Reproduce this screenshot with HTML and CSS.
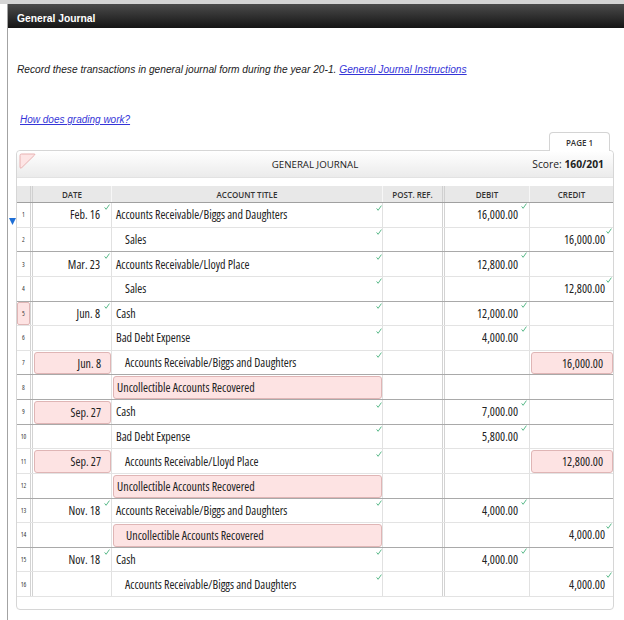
FILE: index.html
```html
<!DOCTYPE html>
<html>
<head>
<meta charset="utf-8">
<link rel="stylesheet" href="styles.css">
</head>
<body>
<div class="strip"></div>
<div class="frame">
  <div class="bar">General Journal</div>
  <div class="content">
    <p class="intro">Record these transactions in general journal form during the year 20-1. <a href="#">General Journal Instructions</a></p>
    <p class="grading"><a href="#">How does grading work?</a></p>
    <div class="tabs"><div class="tab">PAGE 1</div></div>
    <div class="panel">
      <div class="phead">
        <svg class="flag" viewBox="0 0 17 16"><path d="M2.5 1 H15 Q16.6 1 15.6 2 L2.8 14.6 Q1 16 1 14 V2.5 Q1 1 2.5 1 Z"/></svg>
        <div class="ptitle">GENERAL JOURNAL</div>
        <div class="score">Score: <b>160/201</b></div>
      </div>
      <div class="jtable">
        <div class="jrow head"><div class="n"></div><div>DATE</div><div>ACCOUNT TITLE</div><div class="p">POST. REF.</div><div>DEBIT</div><div>CREDIT</div></div>

        <div class="jrow">
          <svg class="mark" viewBox="0 0 7 7"><path d="M0 0H7L3.5 7Z"/></svg>
          <div class="n">1</div>
          <div class="d">Feb. 16<svg class="ck" viewBox="0 0 6 6"><path d="M0.6 3.4L2.1 5.3L5.4 0.6"/></svg></div>
          <div class="a">Accounts Receivable/Biggs and Daughters<svg class="ck" viewBox="0 0 6 6"><path d="M0.6 3.4L2.1 5.3L5.4 0.6"/></svg></div>
          <div class="p"></div>
          <div class="db">16,000.00<svg class="ck" viewBox="0 0 6 6"><path d="M0.6 3.4L2.1 5.3L5.4 0.6"/></svg></div>
          <div class="cr"></div>
        </div>
        <div class="jrow sep">
          <div class="n">2</div>
          <div class="d"></div>
          <div class="a in">Sales<svg class="ck" viewBox="0 0 6 6"><path d="M0.6 3.4L2.1 5.3L5.4 0.6"/></svg></div>
          <div class="p"></div>
          <div class="db"></div>
          <div class="cr">16,000.00<svg class="ck" viewBox="0 0 6 6"><path d="M0.6 3.4L2.1 5.3L5.4 0.6"/></svg></div>
        </div>
        <div class="jrow">
          <div class="n">3</div>
          <div class="d">Mar. 23<svg class="ck" viewBox="0 0 6 6"><path d="M0.6 3.4L2.1 5.3L5.4 0.6"/></svg></div>
          <div class="a">Accounts Receivable/Lloyd Place<svg class="ck" viewBox="0 0 6 6"><path d="M0.6 3.4L2.1 5.3L5.4 0.6"/></svg></div>
          <div class="p"></div>
          <div class="db">12,800.00<svg class="ck" viewBox="0 0 6 6"><path d="M0.6 3.4L2.1 5.3L5.4 0.6"/></svg></div>
          <div class="cr"></div>
        </div>
        <div class="jrow sep">
          <div class="n">4</div>
          <div class="d"></div>
          <div class="a in">Sales<svg class="ck" viewBox="0 0 6 6"><path d="M0.6 3.4L2.1 5.3L5.4 0.6"/></svg></div>
          <div class="p"></div>
          <div class="db"></div>
          <div class="cr">12,800.00<svg class="ck" viewBox="0 0 6 6"><path d="M0.6 3.4L2.1 5.3L5.4 0.6"/></svg></div>
        </div>
        <div class="jrow">
          <div class="n x"><span class="err">5</span></div>
          <div class="d">Jun. 8<svg class="ck" viewBox="0 0 6 6"><path d="M0.6 3.4L2.1 5.3L5.4 0.6"/></svg></div>
          <div class="a">Cash<svg class="ck" viewBox="0 0 6 6"><path d="M0.6 3.4L2.1 5.3L5.4 0.6"/></svg></div>
          <div class="p"></div>
          <div class="db">12,000.00<svg class="ck" viewBox="0 0 6 6"><path d="M0.6 3.4L2.1 5.3L5.4 0.6"/></svg></div>
          <div class="cr"></div>
        </div>
        <div class="jrow">
          <div class="n">6</div>
          <div class="d"></div>
          <div class="a">Bad Debt Expense<svg class="ck" viewBox="0 0 6 6"><path d="M0.6 3.4L2.1 5.3L5.4 0.6"/></svg></div>
          <div class="p"></div>
          <div class="db">4,000.00<svg class="ck" viewBox="0 0 6 6"><path d="M0.6 3.4L2.1 5.3L5.4 0.6"/></svg></div>
          <div class="cr"></div>
        </div>
        <div class="jrow sep">
          <div class="n">7</div>
          <div class="d x"><span class="err">Jun. 8</span></div>
          <div class="a in">Accounts Receivable/Biggs and Daughters<svg class="ck" viewBox="0 0 6 6"><path d="M0.6 3.4L2.1 5.3L5.4 0.6"/></svg></div>
          <div class="p"></div>
          <div class="db"></div>
          <div class="cr x"><span class="err">16,000.00</span></div>
        </div>
        <div class="jrow sep">
          <div class="n">8</div>
          <div class="d"></div>
          <div class="a x"><span class="err">Uncollectible Accounts Recovered</span></div>
          <div class="p"></div>
          <div class="db"></div>
          <div class="cr"></div>
        </div>
        <div class="jrow sep">
          <div class="n">9</div>
          <div class="d x"><span class="err">Sep. 27</span></div>
          <div class="a">Cash<svg class="ck" viewBox="0 0 6 6"><path d="M0.6 3.4L2.1 5.3L5.4 0.6"/></svg></div>
          <div class="p"></div>
          <div class="db">7,000.00<svg class="ck" viewBox="0 0 6 6"><path d="M0.6 3.4L2.1 5.3L5.4 0.6"/></svg></div>
          <div class="cr"></div>
        </div>
        <div class="jrow">
          <div class="n">10</div>
          <div class="d"></div>
          <div class="a">Bad Debt Expense<svg class="ck" viewBox="0 0 6 6"><path d="M0.6 3.4L2.1 5.3L5.4 0.6"/></svg></div>
          <div class="p"></div>
          <div class="db">5,800.00<svg class="ck" viewBox="0 0 6 6"><path d="M0.6 3.4L2.1 5.3L5.4 0.6"/></svg></div>
          <div class="cr"></div>
        </div>
        <div class="jrow">
          <div class="n">11</div>
          <div class="d x"><span class="err">Sep. 27</span></div>
          <div class="a in">Accounts Receivable/Lloyd Place<svg class="ck" viewBox="0 0 6 6"><path d="M0.6 3.4L2.1 5.3L5.4 0.6"/></svg></div>
          <div class="p"></div>
          <div class="db"></div>
          <div class="cr x"><span class="err">12,800.00</span></div>
        </div>
        <div class="jrow sep">
          <div class="n">12</div>
          <div class="d"></div>
          <div class="a x"><span class="err">Uncollectible Accounts Recovered</span></div>
          <div class="p"></div>
          <div class="db"></div>
          <div class="cr"></div>
        </div>
        <div class="jrow">
          <div class="n">13</div>
          <div class="d">Nov. 18<svg class="ck" viewBox="0 0 6 6"><path d="M0.6 3.4L2.1 5.3L5.4 0.6"/></svg></div>
          <div class="a">Accounts Receivable/Biggs and Daughters<svg class="ck" viewBox="0 0 6 6"><path d="M0.6 3.4L2.1 5.3L5.4 0.6"/></svg></div>
          <div class="p"></div>
          <div class="db">4,000.00<svg class="ck" viewBox="0 0 6 6"><path d="M0.6 3.4L2.1 5.3L5.4 0.6"/></svg></div>
          <div class="cr"></div>
        </div>
        <div class="jrow sep">
          <div class="n">14</div>
          <div class="d"></div>
          <div class="a in x"><span class="err">Uncollectible Accounts Recovered</span></div>
          <div class="p"></div>
          <div class="db"></div>
          <div class="cr">4,000.00<svg class="ck" viewBox="0 0 6 6"><path d="M0.6 3.4L2.1 5.3L5.4 0.6"/></svg></div>
        </div>
        <div class="jrow">
          <div class="n">15</div>
          <div class="d">Nov. 18<svg class="ck" viewBox="0 0 6 6"><path d="M0.6 3.4L2.1 5.3L5.4 0.6"/></svg></div>
          <div class="a">Cash<svg class="ck" viewBox="0 0 6 6"><path d="M0.6 3.4L2.1 5.3L5.4 0.6"/></svg></div>
          <div class="p"></div>
          <div class="db">4,000.00<svg class="ck" viewBox="0 0 6 6"><path d="M0.6 3.4L2.1 5.3L5.4 0.6"/></svg></div>
          <div class="cr"></div>
        </div>
        <div class="jrow">
          <div class="n">16</div>
          <div class="d"></div>
          <div class="a in">Accounts Receivable/Biggs and Daughters<svg class="ck" viewBox="0 0 6 6"><path d="M0.6 3.4L2.1 5.3L5.4 0.6"/></svg></div>
          <div class="p"></div>
          <div class="db"></div>
          <div class="cr">4,000.00<svg class="ck" viewBox="0 0 6 6"><path d="M0.6 3.4L2.1 5.3L5.4 0.6"/></svg></div>
        </div>
      </div>
    </div>
  </div>
</div>
</body>
</html>
```

FILE: styles.css
```css
body {
  margin: 0;
  font-family: "Liberation Sans", Arial, sans-serif;
  background: #fff;
  color: #222;
}
.strip {
  height: 4px;
  background: #d4d4d4;
}
.frame {
  margin-left: 7px;
  border-left: 1px solid #a3a3a3;
  min-height: 616px;
}
.bar {
  height: 24px;
  box-sizing: border-box;
  padding: 5px 0 0 9px;
  line-height: 19px;
  background: linear-gradient(#4b4b4b, #151515);
  color: #fff;
  font-weight: bold;
  font-size: 10.3px;
}
.content {
  padding: 0 10px 0 8px;
}
.intro {
  margin: 35px 0 0 1px;
  font-size: 10.2px;
  line-height: 13px;
  font-style: italic;
  color: #222;
}
.intro a,
.grading a {
  color: #3535d8;
  text-decoration: underline;
}
.grading {
  margin: 38px 0 0 4px;
  font-size: 10px;
  line-height: 12px;
  font-style: italic;
}
.tabs {
  display: flex;
  justify-content: flex-end;
  margin-top: 6px;
  padding-right: 4px;
}
.tab {
  width: 61px;
  height: 19px;
  box-sizing: border-box;
  border: 1px solid #d4d4d4;
  border-bottom: none;
  border-radius: 4px 4px 0 0;
  background: #fff;
  font-family: "Open Sans", sans-serif;
  font-stretch: 90%;
  font-weight: 600;
  font-size: 8px;
  color: #333;
  display: flex;
  align-items: center;
  justify-content: center;
  margin-bottom: -1px;
  position: relative;
  z-index: 1;
}
.panel {
  border: 1px solid #d6d6d6;
  border-radius: 4px;
  padding-bottom: 12px;
  font-family: "Open Sans", sans-serif;
  font-stretch: 75%;
  color: #222;
}
.phead {
  height: 27px;
  box-sizing: border-box;
  border-bottom: 1px solid #e2e2e2;
  border-radius: 4px 4px 0 0;
  background: linear-gradient(#fff, #ebebeb);
  display: grid;
  grid-template-columns: 1fr auto 1fr;
  align-items: center;
}
.flag {
  width: 17px;
  height: 16px;
  margin: 2px 0 0 2px;
  align-self: start;
  fill: #fde5e5;
  stroke: #e8b2b2;
  stroke-width: 1;
}
.ptitle {
  font-size: 9.7px;
  font-stretch: 92%;
  color: #222;
}
.score {
  justify-self: end;
  padding-right: 9px;
  font-size: 10.3px;
  font-stretch: 88%;
  color: #222;
}
.jtable {
  margin-top: 8px;
}
.jrow {
  display: grid;
  grid-template-columns: 16px 79px 271px 62px 85px 1fr;
  height: 24.625px;
  box-sizing: border-box;
  border-bottom: 1px solid #e3e3e3;
  position: relative;
  font-size: 12px;
}
.jrow.sep {
  border-bottom-color: #a9a9a9;
}
.jrow > div {
  border-right: 1px solid #e1e1e1;
  position: relative;
  display: flex;
  align-items: center;
  min-width: 0;
  white-space: nowrap;
}
.jrow > div:last-child {
  border-right: none;
}
.jrow > .n,
.jrow > .p {
  border-right: 3px double #d3d3d3;
}
.jrow.head {
  height: 17px;
  background: #e8e8e8;
  border-bottom-color: #a0a0a0;
  font-size: 8px;
  font-stretch: 95%;
  font-weight: 600;
  color: #333;
}
.jrow.head > div {
  justify-content: center;
  border-right-color: #f7f7f7;
}
.jrow.head > .n,
.jrow.head > .p {
  border-right-color: #d0d0d0;
}
.n {
  justify-content: center;
  font-size: 6.5px;
  color: #333;
}
.d {
  justify-content: flex-end;
  padding-right: 11px;
}
.a {
  padding-left: 4px;
}
.a.in {
  padding-left: 13px;
}
.db {
  justify-content: flex-end;
  padding-right: 11px;
}
.cr {
  justify-content: flex-end;
  padding-right: 8px;
}
.jrow > div.x {
  padding: 0;
  align-items: stretch;
}
.err {
  flex: 1;
  margin: 1px 0 0 1px;
  background: #fde3e3;
  border: 1px solid #dfb5b5;
  border-radius: 3px;
  display: flex;
  align-items: center;
}
.n .err {
  justify-content: center;
  margin: 0;
  border-radius: 2px;
}
.d .err {
  justify-content: flex-end;
  padding-right: 9px;
}
.a .err {
  padding-left: 3px;
}
.a.in .err {
  padding-left: 12px;
}
.cr .err {
  justify-content: flex-end;
  padding-right: 9px;
}
.ck {
  position: absolute;
  top: 1px;
  right: 2px;
  width: 6px;
  height: 6px;
  fill: none;
  stroke: #5ab98a;
  stroke-width: 1;
}
.d .ck {
  right: 1.5px;
}
.a .ck {
  right: 0.5px;
  top: 1.5px;
}
.db .ck {
  right: 2px;
  top: 0;
}
.cr .ck {
  right: 1px;
  top: 0;
}
.mark {
  position: absolute;
  left: -8px;
  top: 15px;
  width: 7px;
  height: 7px;
  fill: #1f6fd6;
}
```
